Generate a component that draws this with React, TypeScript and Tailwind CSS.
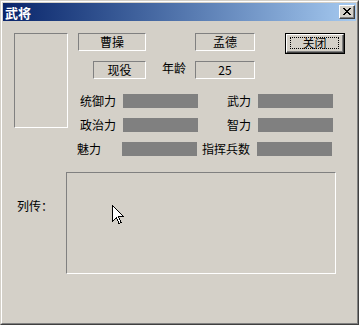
import React from 'react'

// 经典 Win 风格的凹陷边框
const sunken = 'border border-t-[#808080] border-l-[#808080] border-r-white border-b-white'

function Field({ text, className }: { text: string; className: string }) {
  return (
    <div className={`${sunken} ${className} h-[18px] flex items-center justify-center leading-none`}>
      {text}
    </div>
  )
}

function Bar() {
  return <div className="w-[75px] h-[14px] bg-[#808080]" />
}

const stats = [
  { left: '统御力', leftCls: 'pl-[2px]', right: '武力' },
  { left: '政治力', leftCls: 'pl-[2px]', right: '智力' },
  { left: '魅力', leftCls: 'pl-0 -ml-[1px]', right: '指挥兵数' },
]

export default function App() {
  return (
    <div className="relative w-[359px] h-[325px] bg-[#d4d0c8] text-[12px] text-black font-['Noto_Sans_CJK_SC','Liberation_Sans',sans-serif] border border-t-[#d4d0c8] border-l-[#d4d0c8] border-r-[#404040] border-b-[#404040]">
      <div className="h-full p-px border border-t-white border-l-white border-r-[#808080] border-b-[#808080]">
        {/* 标题栏 */}
        <div className="h-[18px] flex items-center justify-between bg-gradient-to-r from-[#0a246a] to-[#a6caf0]">
          <span className="pl-[2px] text-white text-[13px] font-bold leading-none">武将</span>
          <div className="mr-[1px] w-[16px] h-[14px] bg-[#d4d0c8] border border-t-white border-l-white border-r-[#404040] border-b-[#404040] flex">
            <div className="flex-1 border-r border-b border-[#808080] flex items-center justify-center">
              <svg width="8" height="7" viewBox="0 0 8 7" shapeRendering="crispEdges">
                <path d="M0 0h2v1h-2zM6 0h2v1h-2zM1 1h2v1h-2zM5 1h2v1h-2zM2 2h4v1h-4zM3 3h2v1h-2zM2 4h4v1h-4zM1 5h2v1h-2zM5 5h2v1h-2zM0 6h2v1h-2zM6 6h2v1h-2z" fill="#000" />
              </svg>
            </div>
          </div>
        </div>

        {/* 上半部分 */}
        <div className="flex items-start pt-[12px]">
          <div className={`${sunken} ml-[11px] w-[54px] h-[95px]`} />
          <div className="ml-[10px] flex flex-col">
            <div className="flex items-start">
              <Field text="曹操" className="w-[68px]" />
              <Field text="孟德" className="ml-[49px] w-[60px]" />
              <button className="ml-[30px] w-[60px] h-[21px] border border-black bg-[#d4d0c8] flex">
                <div className="flex-1 flex border border-t-white border-l-white border-r-[#404040] border-b-[#404040]">
                  <div className="flex-1 flex border-r border-b border-[#808080] px-[3px] py-[2px]">
                    <div className="flex-1 border border-dotted border-black flex items-center justify-center leading-none">
                      关闭
                    </div>
                  </div>
                </div>
              </button>
            </div>
            <div className="flex items-start mt-[7px]">
              <Field text="现役" className="ml-[15px] w-[53px]" />
              <span className="ml-[16px] w-[24px] h-[14px] leading-[14px]">年龄</span>
              <Field text="25" className="ml-[9px] w-[60px]" />
            </div>
            <div className="flex flex-col gap-[10px] mt-[15px]">
              {stats.map((s) => (
                <div key={s.left} className="flex items-center h-[14px]">
                  <span className={`w-[45px] leading-none ${s.leftCls}`}>{s.left}</span>
                  <Bar />
                  <span className="w-[60px] pr-[7px] text-right leading-none">{s.right}</span>
                  <Bar />
                </div>
              ))}
            </div>
          </div>
        </div>

        {/* 列传 */}
        <div className="flex items-start mt-[16px]">
          <span className="ml-[14px] w-[49px] mt-[28px] leading-none">列传：</span>
          <div className={`${sunken} w-[270px] h-[102px]`} />
        </div>
      </div>

      {/* 鼠标指针 */}
      <svg className="absolute left-[111px] top-[204px]" width="12" height="20" viewBox="0 0 12 20" shapeRendering="crispEdges">
        <path d="M0.5 0.5 V16.5 L4.5 12.5 L7 18.5 L9 17.5 L6.5 11.5 H11.5 Z" fill="#fff" stroke="#000" strokeWidth="1" />
      </svg>
    </div>
  )
}
